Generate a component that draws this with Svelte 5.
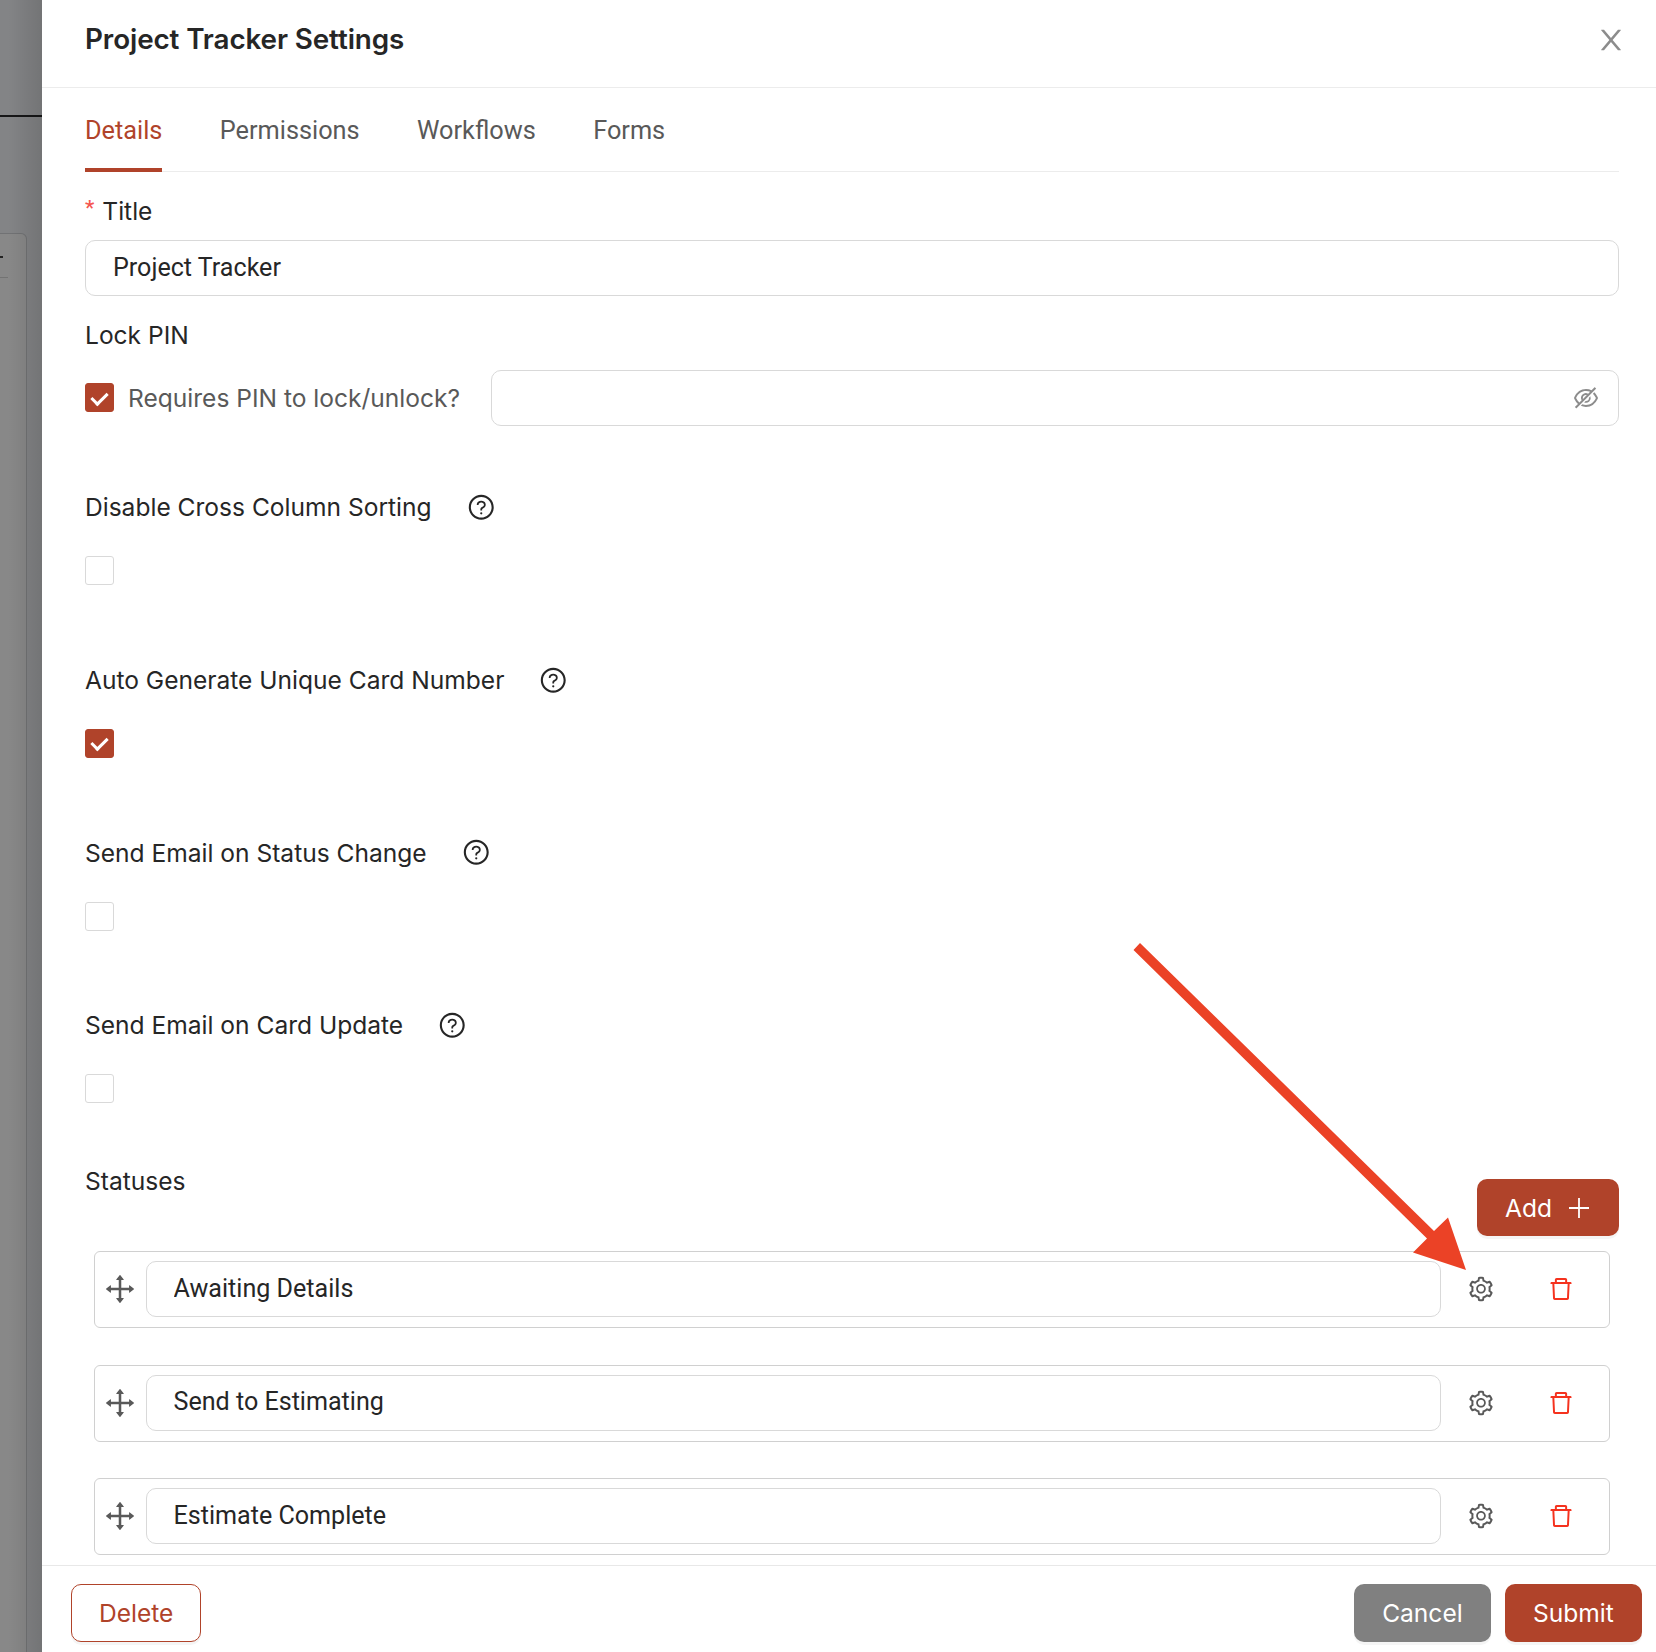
<script lang="ts">
  type TOption = { label: string; checked: boolean };

  const tabs = ["Details", "Permissions", "Workflows", "Forms"];
  let activeTab = $state("Details");

  let title = $state("Project Tracker");
  let pin = $state("");
  let requiresPin = $state(true);

  const options: TOption[] = $state([
    { label: "Disable Cross Column Sorting", checked: false },
    { label: "Auto Generate Unique Card Number", checked: true },
    { label: "Send Email on Status Change", checked: false },
    { label: "Send Email on Card Update", checked: false },
  ]);

  let statuses = $state([
    "Awaiting Details",
    "Send to Estimating",
    "Estimate Complete",
  ]);

  const icons = {
    close: "M563.8 512l262.5-312.9c4.4-5.2.7-13.1-6.1-13.1h-79.8c-4.7 0-9.2 2.1-12.3 5.7L511.6 449.8 295.1 191.7c-3-3.6-7.5-5.7-12.3-5.7H203c-6.8 0-10.5 7.9-6.1 13.1L459.4 512 196.9 824.9A7.95 7.95 0 00203 838h79.8c4.7 0 9.2-2.1 12.3-5.7l216.5-258.1 216.5 258.1c3 3.6 7.5 5.7 12.3 5.7h79.8c6.8 0 10.5-7.9 6.1-13.1L563.8 512z",
    eyeOff: "M942.2 486.2Q889.47 375.11 816.7 305l-50.88 50.88C807.31 395.53 843.45 447.4 874.7 512 791.5 684.2 673.4 766 512 766q-72.67 0-133.87-22.38L323 798.75Q408 838 512 838q288.3 0 430.2-300.3a60.29 60.29 0 000-51.5zm-63.57-320.64L836 122.88a8 8 0 00-11.32 0L715.31 232.2Q624.86 186 512 186q-288.3 0-430.2 300.3a60.3 60.3 0 000 51.5q56.69 119.4 136.5 191.41L112.48 835a8 8 0 000 11.31L155.17 889a8 8 0 0011.31 0l712.15-712.12a8 8 0 000-11.32zM149.3 512C232.6 339.8 350.7 258 512 258c54.54 0 104.13 9.36 149.12 28.39l-70.3 70.3a176 176 0 00-238.13 238.13l-83.42 83.42C223.1 637.49 183.3 582.28 149.3 512zm246.7 0a112.11 112.11 0 01146.2-106.69L401.31 546.2A112 112 0 01396 512zM508 624c-3.46 0-6.87-.16-10.25-.47l-52.82 52.82a176.09 176.09 0 00227.42-227.42l-52.82 52.82c.31 3.38.47 6.79.47 10.25a111.94 111.94 0 01-112 112z",
    help: "M512 64C264.6 64 64 264.6 64 512s200.6 448 448 448 448-200.6 448-448S759.4 64 512 64zm0 820c-205.4 0-372-166.6-372-372s166.6-372 372-372 372 166.6 372 372-166.6 372-372 372zM623.6 316.7C593.6 290.4 554 276 512 276s-81.6 14.5-111.6 40.7C369.2 344 352 380.7 352 420v7.6c0 4.4 3.6 8 8 8h48c4.4 0 8-3.6 8-8V420c0-44.1 43.1-80 96-80s96 35.9 96 80c0 31.1-22 59.6-56.1 72.7-21.2 8.1-39.2 22.3-52.1 40.9-13.1 19-19.9 41.8-19.9 64.9V620c0 4.4 3.6 8 8 8h48c4.4 0 8-3.6 8-8v-22.7a48.3 48.3 0 0130.9-44.8c59-22.7 97.1-74.7 97.1-132.5.1-39.3-17.1-76-48.3-103.3zM472 732a40 40 0 1080 0 40 40 0 10-80 0z",
    drag: "M909.3 506.3L781.7 405.6a7.23 7.23 0 00-11.7 5.7V476H548V254h64.8c6 0 9.4-7 5.7-11.7L517.7 114.7a7.14 7.14 0 00-11.3 0L405.6 242.3a7.23 7.23 0 005.7 11.7H476v222H254v-64.8c0-6-7-9.4-11.7-5.7L114.7 506.3a7.14 7.14 0 000 11.3l127.5 100.8c4.7 3.7 11.7.4 11.7-5.7V548h222v222h-64.8c-6 0-9.4 7-5.7 11.7l100.8 127.5c2.9 3.7 8.5 3.7 11.3 0l100.8-127.5c3.7-4.7.4-11.7-5.7-11.7H548V548h222v64.8c0 6 7 9.4 11.7 5.7l127.5-100.8a7.3 7.3 0 00.1-11.4z",
    setting: "M924.8 625.7l-65.5-56c3.1-19 4.7-38.4 4.7-57.8s-1.6-38.8-4.7-57.8l65.5-56a32.03 32.03 0 009.3-35.2l-.9-2.6a443.74 443.74 0 00-79.7-137.9l-1.8-2.1a32.12 32.12 0 00-35.1-9.5l-81.3 28.9c-30-24.6-63.5-44-99.7-57.6l-15.7-85a32.05 32.05 0 00-25.8-25.7l-2.7-.5c-52.1-9.4-106.9-9.4-159 0l-2.7.5a32.05 32.05 0 00-25.8 25.7l-15.8 85.4a351.86 351.86 0 00-99 57.4l-81.9-29.1a32 32 0 00-35.1 9.5l-1.8 2.1a446.02 446.02 0 00-79.7 137.9l-.9 2.6c-4.5 12.5-.8 26.5 9.3 35.2l66.3 56.6c-3.1 18.8-4.6 38-4.6 57.1 0 19.2 1.5 38.4 4.6 57.1L99 625.5a32.03 32.03 0 00-9.3 35.2l.9 2.6c18.1 50.4 44.9 96.9 79.7 137.9l1.8 2.1a32.12 32.12 0 0035.1 9.5l81.9-29.1c29.8 24.5 63.1 43.9 99 57.4l15.8 85.4a32.05 32.05 0 0025.8 25.7l2.7.5a449.4 449.4 0 00159 0l2.7-.5a32.05 32.05 0 0025.8-25.7l15.7-85a350 350 0 0099.7-57.6l81.3 28.9a32 32 0 0035.1-9.5l1.8-2.1c34.8-41.1 61.6-87.5 79.7-137.9l.9-2.6c4.5-12.3.8-26.3-9.3-35zM788.3 465.9c2.5 15.1 3.8 30.6 3.8 46.1s-1.3 31-3.8 46.1l-6.6 40.1 74.7 63.9a370.03 370.03 0 01-42.6 73.6L721 702.8l-31.4 25.8c-23.9 19.6-50.5 35-79.3 45.8l-38.1 14.3-17.9 97a377.5 377.5 0 01-85 0l-17.9-97.2-37.8-14.5c-28.5-10.8-55-26.2-78.7-45.7l-31.4-25.9-93.4 33.2c-17-22.9-31.2-47.6-42.6-73.6l75.5-64.5-6.5-40c-2.4-14.9-3.7-30.3-3.7-45.5 0-15.3 1.2-30.6 3.7-45.5l6.5-40-75.5-64.5c11.3-26.1 25.6-50.7 42.6-73.6l93.4 33.2 31.4-25.9c23.7-19.5 50.2-34.9 78.7-45.7l37.9-14.3 17.9-97.2c28.1-3.2 56.8-3.2 85 0l17.9 97 38.1 14.3c28.7 10.8 55.4 26.2 79.3 45.8l31.4 25.8 92.8-32.9c17 22.9 31.2 47.6 42.6 73.6L781.8 426l6.5 39.9zM512 326c-97.2 0-176 78.8-176 176s78.8 176 176 176 176-78.8 176-176-78.8-176-176-176zm79.2 255.2A111.6 111.6 0 01512 614c-29.9 0-58-11.7-79.2-32.8A111.6 111.6 0 01400 502c0-29.9 11.7-58 32.8-79.2C454 401.6 482.1 390 512 390c29.9 0 58 11.6 79.2 32.8A111.6 111.6 0 01624 502c0 29.9-11.7 58-32.8 79.2z",
    trash: "M360 184h-8c4.4 0 8-3.6 8-8v8h304v-8c0 4.4 3.6 8 8 8h-8v72h72v-80c0-35.3-28.7-64-64-64H352c-35.3 0-64 28.7-64 64v80h72v-72zm504 72H160c-17.7 0-32 14.3-32 32v32c0 4.4 3.6 8 8 8h60.4l24.7 523c1.6 34.1 29.8 61 63.9 61h454c34.2 0 62.3-26.8 63.9-61l24.7-523H888c4.4 0 8-3.6 8-8v-32c0-17.7-14.3-32-32-32zM731.3 840H292.7l-24.2-512h487l-24.2 512z",
  };
</script>

{#snippet icon(path: string)}
  <svg class="icon" viewBox="0 0 1024 1024" fill="currentColor" aria-hidden="true">
    <path d={path} />
  </svg>
{/snippet}

<div class="screen">
  <div class="behind">
    <div class="behind-top"></div>
    <div class="behind-card">
      <div class="behind-dash"></div>
      <div class="behind-line"></div>
    </div>
  </div>

  <section class="drawer">
    <header class="header">
      <h1>Project Tracker Settings</h1>
      <button class="close" aria-label="Close">{@render icon(icons.close)}</button>
    </header>

    <div class="body">
      <nav class="tabs">
        {#each tabs as tab}
          <button class="tab" class:active={tab === activeTab} onclick={() => (activeTab = tab)}>
            {tab}
          </button>
        {/each}
      </nav>

      <label class="label title-label" for="title"><span class="required">*</span>Title</label>
      <input id="title" class="input" bind:value={title} />

      <div class="label pin-label">Lock PIN</div>
      <div class="pin-row">
        <label class="pin-check">
          <input class="checkbox" type="checkbox" bind:checked={requiresPin} />
          <span>Requires PIN to lock/unlock?</span>
        </label>
        <div class="input password">
          <input type="password" aria-label="PIN" bind:value={pin} />
          {@render icon(icons.eyeOff)}
        </div>
      </div>

      <div class="options">
        {#each options as option}
          <div class="option">
            <div class="label option-label">
              <span>{option.label}</span>
              {@render icon(icons.help)}
            </div>
            <input class="checkbox" type="checkbox" aria-label={option.label} bind:checked={option.checked} />
          </div>
        {/each}
      </div>

      <div class="statuses-head">
        <div class="label">Statuses</div>
        <button class="btn primary add">
          <span>Add</span>
          <svg class="plus" viewBox="0 0 20 20" stroke="currentColor" stroke-width="1.8">
            <path d="M10 0v20M0 10h20" />
          </svg>
        </button>
      </div>

      <div class="statuses">
        {#each statuses as _, i}
          <div class="status">
            <span class="drag">{@render icon(icons.drag)}</span>
            <input class="input" aria-label="Status" bind:value={statuses[i]} />
            <button class="action" aria-label="Settings">{@render icon(icons.setting)}</button>
            <button class="action danger" aria-label="Remove">{@render icon(icons.trash)}</button>
          </div>
        {/each}
      </div>
    </div>

    <footer class="footer">
      <button class="btn outline">Delete</button>
      <button class="btn gray">Cancel</button>
      <button class="btn primary">Submit</button>
    </footer>
  </section>

  <svg class="arrow" viewBox="0 0 340 330" fill="#eb4226">
    <path d="M3.5 10L10 3L304 291L318 277.5L336 330L283 312.5L297 298.5Z" />
  </svg>
</div>

<style>
  :global(body) {
    background: #fff;
    overflow: hidden;
  }
  .screen {
    position: relative;
    display: flex;
    width: 1656px;
    height: 1652px;
    overflow: hidden;
    font-family: Roboto, "Liberation Sans", sans-serif;
    font-size: 25px;
    color: #262626;
  }
  button,
  input {
    font: inherit;
    color: inherit;
    box-sizing: border-box;
    margin: 0;
  }
  button {
    border: 0;
    padding: 0;
    background: none;
  }
  h1,
  .label,
  .pin-check,
  .btn {
    font-family: Inter, Roboto, sans-serif;
    font-size: 24.55px;
  }
  .icon {
    display: block;
    width: 28px;
    height: 28px;
    flex: none;
  }

  .behind {
    position: relative;
    width: 42px;
    flex: none;
    background: #838486;
  }
  .behind::after {
    content: "";
    position: absolute;
    inset: 0;
    background: linear-gradient(90deg, transparent 20%, rgba(0, 0, 0, 0.12));
  }
  .behind-top {
    height: 115px;
    border-bottom: 2px solid #161617;
  }
  .behind-card {
    box-sizing: border-box;
    width: 27px;
    height: 1500px;
    margin-top: 116px;
    border: 1px solid #717274;
    border-left: 0;
    border-top-right-radius: 6px;
    background: #888888;
  }
  .behind-dash {
    width: 3px;
    height: 2px;
    margin-top: 22px;
    background: #222;
  }
  .behind-line {
    width: 8px;
    height: 1px;
    margin-top: 19px;
    background: #737373;
  }

  .drawer {
    flex: 1;
    display: flex;
    flex-direction: column;
    background: #fff;
  }
  .header {
    flex: none;
    box-sizing: border-box;
    display: flex;
    justify-content: space-between;
    align-items: center;
    height: 88px;
    padding: 0 29px 9px 43px;
    border-bottom: 1px solid #ececec;
  }
  h1 {
    margin: 0;
    font-size: 27.8px;
    font-weight: 600;
    line-height: 40px;
    letter-spacing: -0.1px;
  }
  .close {
    color: #8c8c8c;
    padding-top: 2px;
  }
  .close .icon {
    width: 32px;
    height: 32px;
  }

  .body {
    flex: 1;
    min-height: 0;
    overflow: hidden;
    padding: 0 37px 0 43px;
  }
  .tabs {
    display: flex;
    gap: 57.4px;
    height: 83px;
    border-bottom: 1px solid #ececec;
  }
  .tab {
    height: 84px;
    padding-top: 5px;
    border-bottom: 4px solid transparent;
    font-size: 25.3px;
    color: #595959;
  }
  .tab.active {
    color: #b0432a;
    border-color: #b0432a;
  }
  .label {
    line-height: 40px;
  }
  .title-label {
    display: block;
    margin-top: 19px;
    height: 49px;
  }
  .required {
    margin-right: 8px;
    font-family: Roboto, sans-serif;
    font-size: 21px;
    font-weight: 500;
    line-height: 0;
    vertical-align: 5px;
    color: #f5564f;
  }
  .input {
    display: block;
    box-sizing: border-box;
    width: 100%;
    height: 56px;
    padding: 0 27px 2px;
    border: 1px solid #d9d9d9;
    border-radius: 10px;
    background: #fff;
    font-size: 25.1px;
    outline: none;
  }
  .pin-label {
    margin-top: 19px;
  }
  .pin-row {
    display: flex;
    align-items: center;
    margin-top: 15px;
  }
  .pin-check {
    flex: none;
    display: flex;
    align-items: center;
    gap: 14px;
    width: 406px;
    color: #595959;
  }
  .password {
    flex: 1;
    display: flex;
    align-items: center;
    padding: 0 18px 0 27px;
    color: #8c8c8c;
  }
  .password input {
    flex: 1;
    border: 0;
    outline: none;
    background: none;
  }
  .checkbox {
    appearance: none;
    flex: none;
    display: flex;
    align-items: center;
    justify-content: center;
    width: 29px;
    height: 29px;
    border: 1px solid #d9d9d9;
    border-radius: 3px;
    background: #fff;
  }
  .checkbox:checked {
    border-color: #b0432a;
    background: #b0432a;
  }
  .checkbox:checked::after {
    content: "";
    width: 7px;
    height: 13px;
    border: solid #fff;
    border-width: 0 3px 3px 0;
    transform: translate(-0.5px, -1px) rotate(45deg);
  }
  .pin-check .checkbox {
    margin-bottom: 1px;
  }

  .options {
    margin-top: 61px;
  }
  .option {
    height: 172.8px;
  }
  .option-label {
    display: flex;
    align-items: center;
    gap: 35px;
    margin-bottom: 29px;
  }
  .option-label .icon {
    width: 28.5px;
    height: 28.5px;
  }
  .statuses-head {
    display: flex;
    justify-content: space-between;
    align-items: flex-start;
    height: 90px;
    margin-top: -17px;
  }
  .btn {
    box-sizing: border-box;
    height: 58px;
    padding: 0 28.2px;
    border-radius: 10px;
    box-shadow: 0 3px 0 rgba(0, 0, 0, 0.04);
  }
  .primary {
    background: #b0432a;
    color: #fff;
  }
  .gray {
    background: #808080;
    color: #fff;
  }
  .outline {
    border: 1px solid #b0432a;
    padding: 0 27px;
    color: #b0432a;
    background: #fff;
    margin-right: auto;
  }
  .add {
    display: flex;
    align-items: center;
    gap: 17px;
    height: 57px;
    margin-top: 18px;
    padding: 0 30px 0 28px;
  }
  .plus {
    width: 20px;
    height: 20px;
  }

  .statuses {
    display: flex;
    flex-direction: column;
    gap: 36.2px;
    padding: 0 9px;
  }
  .status {
    box-sizing: border-box;
    display: flex;
    align-items: center;
    height: 77.2px;
    padding: 0 34px 1px 7px;
    border: 1px solid #d0d0d0;
    border-radius: 6px;
  }
  .drag {
    color: #595959;
    margin-right: 8px;
  }
  .drag .icon {
    width: 36px;
    height: 36px;
  }
  .status .input {
    flex: 1;
    padding-left: 26.5px;
  }
  .action {
    margin-left: 26px;
    color: #595959;
  }
  .danger {
    margin-left: 52px;
    color: #f5321e;
  }

  .footer {
    flex: none;
    box-sizing: border-box;
    display: flex;
    gap: 14px;
    height: 87px;
    padding: 18px 14px 0 29px;
    border-top: 1px solid #e8e8e8;
  }

  .arrow {
    position: absolute;
    left: 1130px;
    top: 940px;
    width: 340px;
    height: 330px;
  }
</style>
